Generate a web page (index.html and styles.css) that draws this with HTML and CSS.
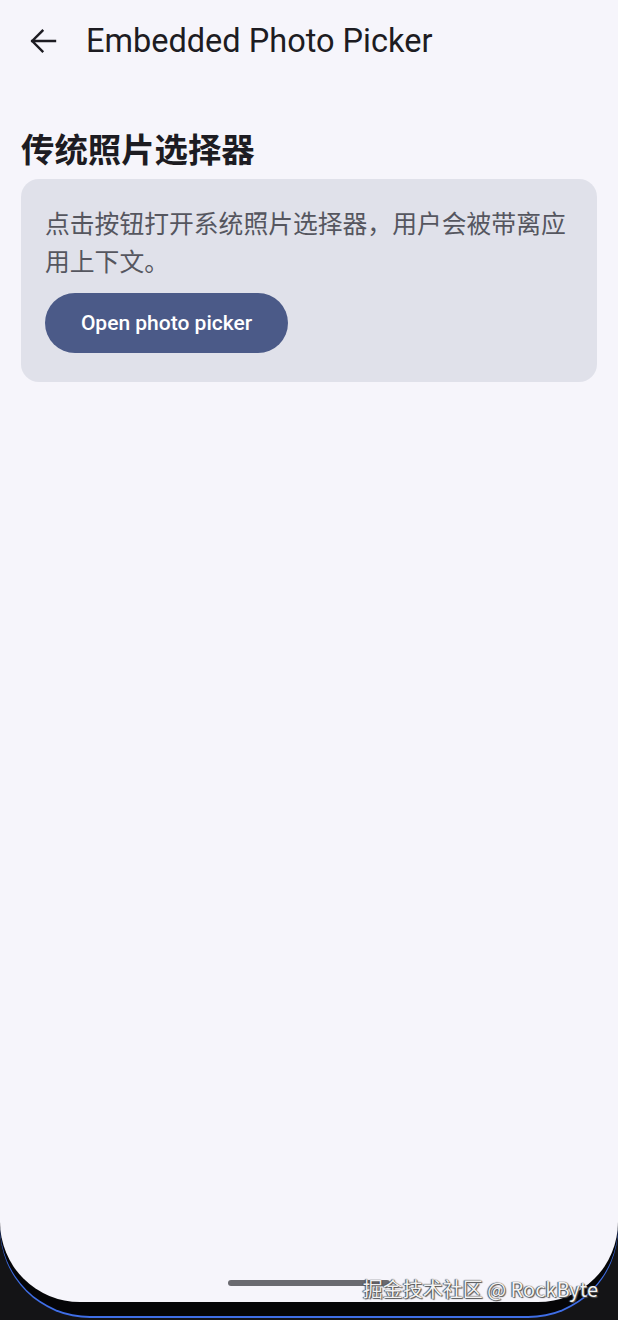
FILE: index.html
```html
<!DOCTYPE html>
<html lang="zh-CN">
<head>
  <meta charset="UTF-8" />
  <meta name="viewport" content="width=device-width, initial-scale=1.0" />
  <title>Embedded Photo Picker</title>
  <link rel="stylesheet" href="styles.css">
</head>
<body>
  <div class="phone">
    <div class="bezel">
      <div class="screen">
        <header class="topbar">
          <button class="back" aria-label="Back">
            <svg viewBox="0 0 24 24" width="36" height="36">
              <path d="M20 12H4.8M11.6 5.2L4.8 12l6.8 6.8" fill="none" stroke="#1d1c22" stroke-width="1.6" stroke-linecap="square" />
            </svg>
          </button>
          <h1 class="title">Embedded Photo Picker</h1>
        </header>

        <main class="content">
          <h2 class="section-title">传统照片选择器</h2>
          <div class="card">
            <p class="card-text">点击按钮打开系统照片选择器，用户会被带离应用上下文。</p>
            <button class="btn">Open photo picker</button>
          </div>
        </main>

        <div class="gesture-bar"></div>
      </div>
    </div>
    <div class="watermark">掘金技术社区 @ RockByte</div>
  </div>
</body>
</html>
```

FILE: styles.css
```css
body {
  margin: 0;
  background: #141416;
  font-family: Roboto, "Noto Sans CJK SC", sans-serif;
}

.phone {
  position: relative;
  height: 1320px;
  overflow: hidden;
}

.bezel {
  height: 1316px;
  background: #050507;
  border-radius: 0 0 90px 90px;
  box-shadow: 0 2px 0 #3f6ee6;
}

.screen {
  position: relative;
  height: 1302px;
  background: #f6f5fb;
  border-radius: 0 0 80px 80px;
}

.topbar {
  height: 82px;
  display: flex;
  align-items: center;
  padding-left: 25px;
}

.back {
  width: 36px;
  height: 36px;
  padding: 0;
  border: none;
  background: none;
  display: flex;
}

.title {
  margin: 0 0 0 25px;
  font-family: Roboto, sans-serif;
  font-size: 32.5px;
  font-weight: 400;
  color: #1d1c22;
}

.content {
  padding: 0 21px;
}

.section-title {
  margin: 44px 0 9px;
  font-family: "Noto Sans CJK SC", sans-serif;
  font-size: 33.4px;
  line-height: 44px;
  font-weight: 700;
  color: #1d1c22;
}

.card {
  background: #e0e1ea;
  border-radius: 18px;
  padding: 24px 24px 29px;
}

.card-text {
  margin: 0;
  font-family: "Noto Sans CJK SC", sans-serif;
  font-size: 24.8px;
  line-height: 38px;
  color: #55565f;
}

.btn {
  margin-top: 14px;
  height: 60px;
  width: 243px;
  border: none;
  border-radius: 30px;
  background: #4b5a88;
  color: #fff;
  font-family: Roboto, sans-serif;
  font-size: 21px;
  font-weight: 500;
}

.gesture-bar {
  position: absolute;
  left: 228px;
  top: 1280px;
  width: 162px;
  height: 6px;
  border-radius: 3px;
  background: #6a6a70;
}

.watermark {
  position: absolute;
  right: 20px;
  top: 1274px;
  font-family: "Noto Sans CJK SC", sans-serif;
  font-size: 20px;
  color: #f2f2f2;
  text-shadow: 0 0 1px #333, 1px 1px 1px #555, -1px 0 1px #555;
}
```
